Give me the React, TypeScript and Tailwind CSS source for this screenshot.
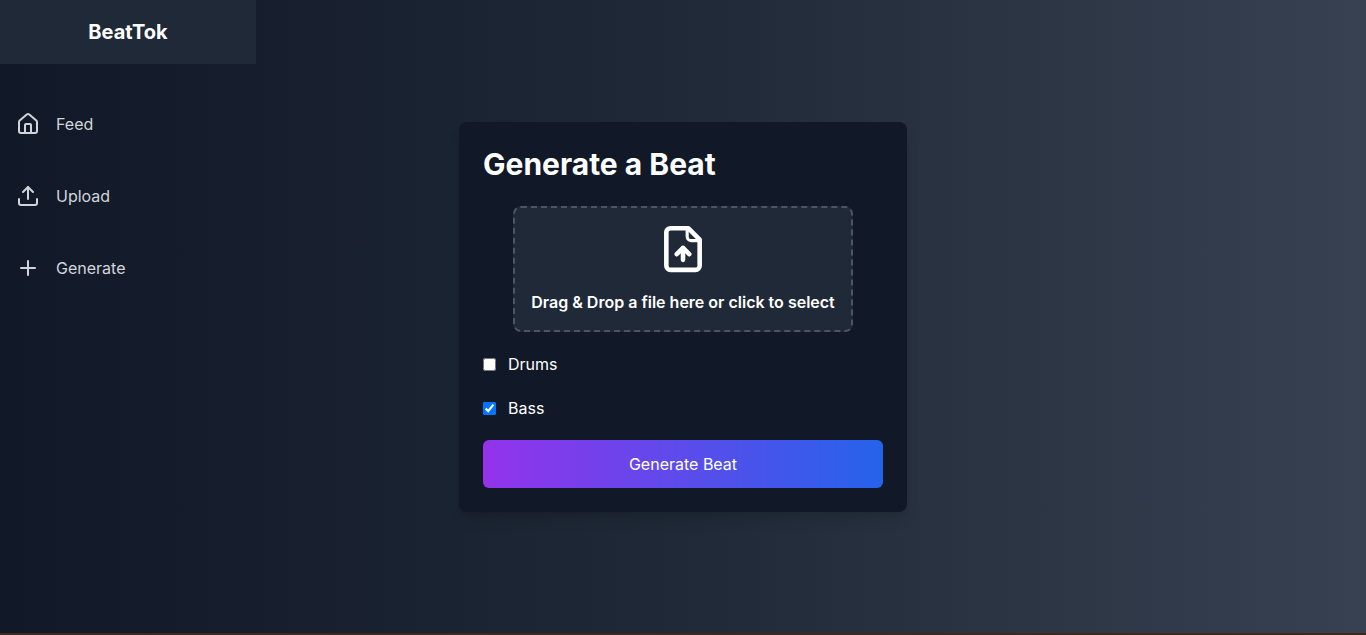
import React from 'react';
import { Home, Plus, Upload } from 'lucide-react';

const navItems = [
  { label: 'Feed', Icon: Home },
  { label: 'Upload', Icon: Upload },
  { label: 'Generate', Icon: Plus },
];

function FileUploadIcon() {
  return (
    <svg width="50" height="50" viewBox="0 0 24 24" fill="none" stroke="currentColor" strokeWidth="2.2" strokeLinecap="round" strokeLinejoin="round">
      <path d="M14.5 2H6a2 2 0 0 0-2 2v16a2 2 0 0 0 2 2h12a2 2 0 0 0 2-2V7.5Z" />
      <path d="M14 2v4a2 2 0 0 0 2 2h4" strokeWidth="1.5" />
      <path d="M12 17.2v-5.7" />
      <path d="m9 14.5 3-3 3 3" />
    </svg>
  );
}

export default function App() {
  return (
    <div className="h-[635px] overflow-hidden bg-[#3a2a20] font-['Inter',sans-serif]">
      <div className="flex h-[633px] bg-linear-to-r/srgb from-[#111827] via-[#1f2937] to-[#374151] text-white">
        <aside className="w-64 shrink-0">
          <div className="flex h-16 items-center justify-center bg-[#1f2937] text-xl font-bold">BeatTok</div>
          <nav className="mt-6">
            {navItems.map(({ label, Icon }) => (
              <div key={label} className="flex h-[72px] items-center gap-4 px-4 text-[#d1d5db]">
                <Icon size={24} strokeWidth={2} />
                <span>{label}</span>
              </div>
            ))}
          </nav>
        </aside>

        <main className="flex flex-1 items-start justify-center pt-[122px]">
          <div className="mr-[256px] w-[448px] rounded-lg bg-[#111827] p-6 shadow-lg">
            <h1 className="mb-6 text-3xl font-bold leading-9">Generate a Beat</h1>
            <div className="mx-auto flex h-[126px] w-[340px] flex-col items-center justify-center rounded-lg border-2 border-dashed border-[#4b5563] bg-[#1f2937]">
              <FileUploadIcon />
              <p className="mt-4 font-semibold">Drag &amp; Drop a file here or click to select</p>
            </div>
            <label className="mt-5 flex h-6 items-center gap-3">
              <input type="checkbox" className="h-[13px] w-[13px]" />
              <span>Drums</span>
            </label>
            <label className="mt-5 flex h-6 items-center gap-3">
              <input type="checkbox" defaultChecked className="h-[13px] w-[13px]" />
              <span>Bass</span>
            </label>
            <button className="mt-5 h-12 w-full rounded-md bg-linear-to-r/srgb from-[#9333ea] to-[#2563eb] text-white">Generate Beat</button>
          </div>
        </main>
      </div>
    </div>
  );
}
